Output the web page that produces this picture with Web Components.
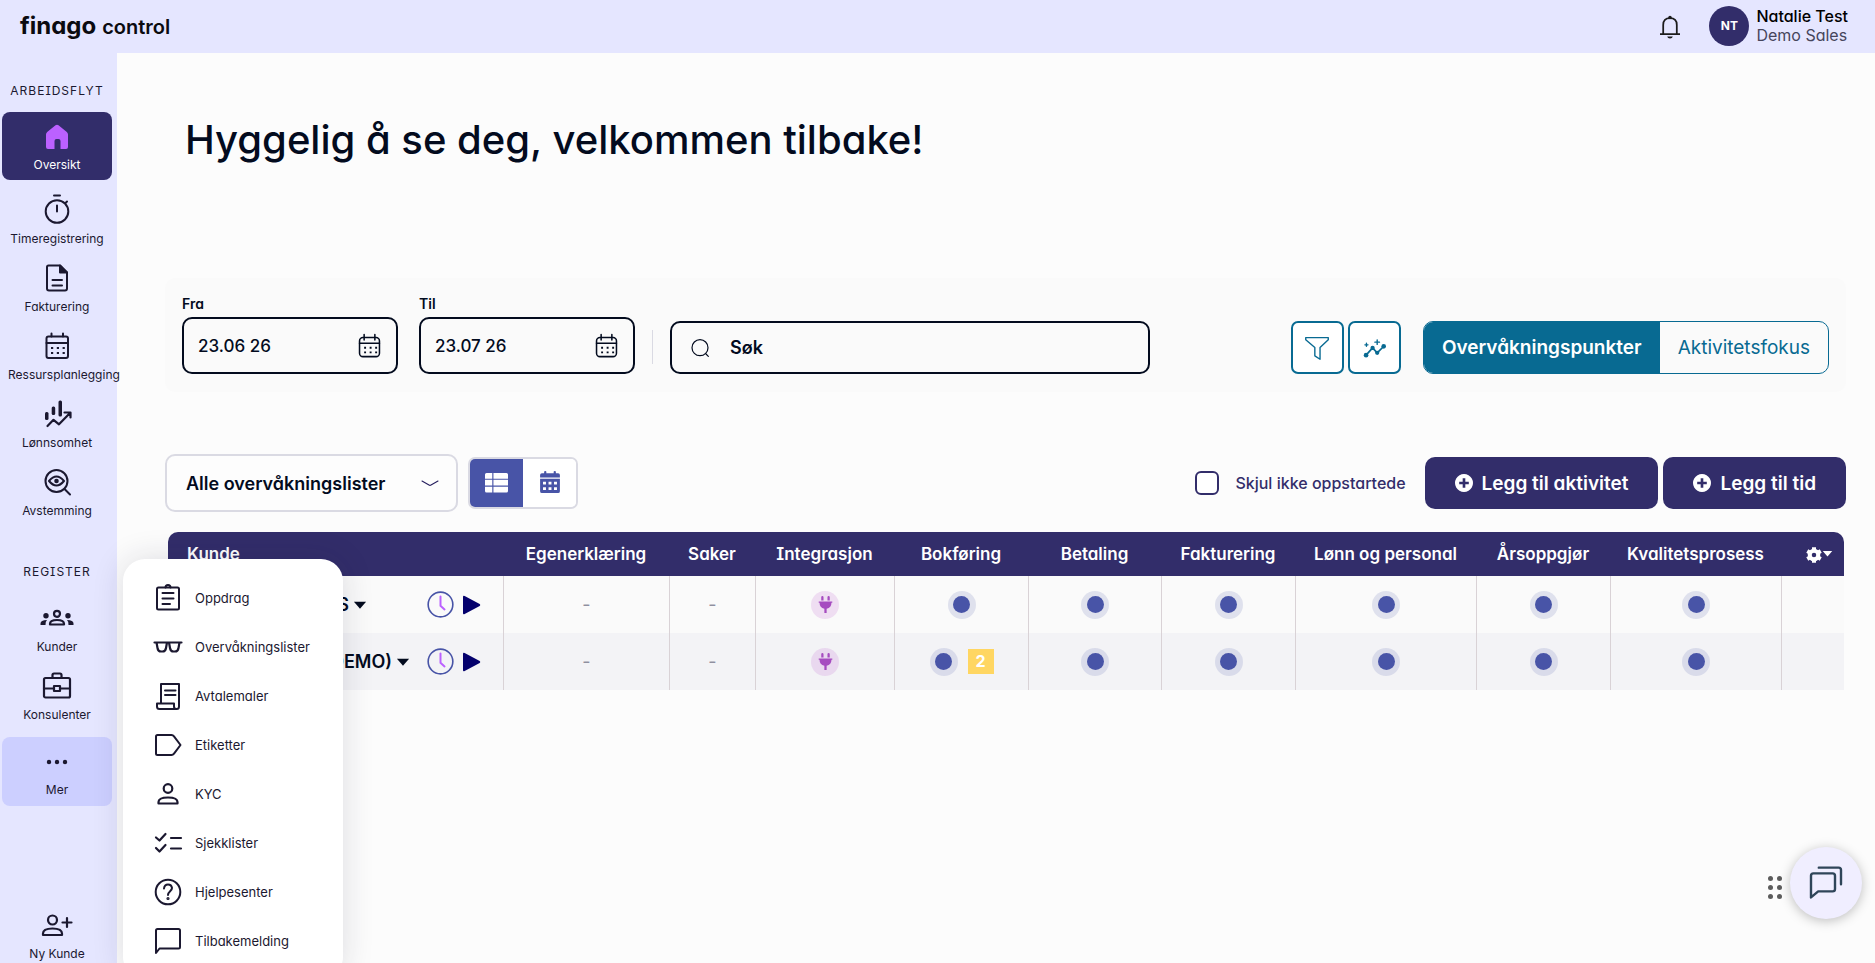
<!DOCTYPE html>
<html lang="no">
<head>
<meta charset="utf-8">
<title>Finago Control</title>
<style>
  :root {
    --navy: #322d6a;
    --ink: #030b1e;
    --lilac: #e5e6ff;
    --teal: #086a92;
    --blue: #4854a7;
    --page: #fcfcfc;
    --line: #dadae3;
  }
  body {
    margin: 0;
    background: var(--page);
    color: var(--ink);
    font-family: Inter, "Liberation Sans", sans-serif;
    font-feature-settings: "cv11", "cv08";
  }
</style>
</head>
<body>
<app-shell>
  <app-header slot="header"></app-header>
  <side-nav slot="nav"></side-nav>
  <welcome-title>Hyggelig å se deg, velkommen tilbake!</welcome-title>
  <filter-panel></filter-panel>
  <list-toolbar></list-toolbar>
  <watch-table></watch-table>
</app-shell>
<chat-launcher></chat-launcher>

<script>
const stroke = (w, body) => `<g fill="none" stroke="currentColor" stroke-width="${w}" stroke-linecap="round" stroke-linejoin="round">${body}</g>`;

// every icon is drawn on a 30 x 30 grid
const ICONS = {
  home: `<path fill="currentColor" d="M4 12.5Q4 11 5.200 10L13.500 3.300Q15 2.200 16.500 3.300L24.800 10Q26 11 26 12.500V25Q26 27 24 27H18.500V19Q18.500 17 16.500 17H14.500Q12.500 17 12.500 19V27H6Q4 27 4 25Z"/>`,
  stopwatch: stroke(2, `<circle cx="15" cy="15.500" r="11.3"/><path d="M15 9.500v6M12-.5h6M23.500 7l1.500-1.500"/>`),
  invoice: stroke(2, `<path d="M6.500 1.500h11.500l7 7V24.500q0 2-2 2H7q-2 0-2-2V3q0-1.500 1.500-1.500zM10.500 16h9.500M10.500 21.500h9.500"/><path fill="currentColor" d="M18 1.500v7h7z"/>`),
  calendar: stroke(2, `<rect x="4.500" y="4.500" width="21.500" height="21.500" rx="2"/><path d="M4.500 11h21.500M9.500 1.500v3M21 1.500v3"/>`) + `<path stroke="currentColor" stroke-width="2.200" stroke-dasharray="2.200 3.600" d="M9 16h14M9 21h14"/>`,
  profit: `<g fill="currentColor"><rect x="3" y="12" width="3.500" height="8" rx="1.500"/><rect x="9.700" y="6.500" width="3.500" height="8.500" rx="1.500"/><rect x="16.500" y=".5" width="3.500" height="16" rx="1.500"/></g>` + stroke(2.2, `<path d="M5.500 26l6-6.200 5.500 4.500L28 13M22.500 12.500h6v5"/>`),
  audit: stroke(2, `<circle cx="14.500" cy="13" r="11"/><path d="M22.500 21l5.500 5.500M7 13q7.500-9 15 0q-7.500 9-15 0z"/><circle cx="14.500" cy="13" r="1.300" fill="currentColor"/>`),
  people: `<g fill="currentColor"><circle cx="4" cy="11.800" r="2.700"/><circle cx="26" cy="11.800" r="2.700"/><path d="M-1.500 21V19.500Q-1.500 16 5 16Q3 18 3.500 21ZM31.500 21V19.500Q31.500 16 25 16Q27 18 26.500 21Z"/></g>` + stroke(2.2, `<circle cx="15" cy="9.800" r="3"/><path d="M8 20.500v-.8q0-3.700 7-3.700t7 3.700v.8z"/>`),
  briefcase: stroke(2.2, `<rect x="2" y="6" width="26" height="19.500" rx="1.500"/><path d="M10.500 6V3q0-1.500 1.500-1.500h6q1.500 0 1.500 1.500v3M2 16.500h10M18 16.500h10"/><rect x="12" y="14" width="6" height="5"/>`),
  dots: `<g fill="currentColor"><circle cx="7" cy="15" r="2.200"/><circle cx="15" cy="15" r="2.200"/><circle cx="23" cy="15" r="2.200"/></g>`,
  personAdd: stroke(2.2, `<circle cx="10.500" cy="9" r="4.500"/><path d="M1 24v-1.500q0-5 9.500-5t9.500 5V24z"/><path d="M25 7v9M20.500 11.500h9"/>`),
  clipboard: stroke(2, `<rect x="4" y="4.500" width="22" height="22" rx="1.500"/><path d="M9.500 10h11M9.500 15.500h11M9.500 21h7.500M12.500 4.500q0-2.500 2.500-2.500t2.500 2.500"/>`),
  glasses: stroke(2.200, `<path d="M1.500 10.500h12.500M16 10.500h12.500M3.500 10.500l1 5.500q.5 3.500 3.500 3.500h1.500q3 0 3.500-3.500l1-5.500M16 10.500l1 5.500q.5 3.500 3.500 3.500h1.500q3 0 3.500-3.500l1-5.500M13.500 10.500h3"/>`),
  template: stroke(2, `<path d="M8 22V3h18v22.500q0 2.500-2.300 2.500H6.500Q4 28 4 25.500V22.500h17v3q0 2.500 2.500 2.500M12 9.500h10.500M12 14h10.500"/>`),
  tag: stroke(2, `<path d="M4.500 5h14q1.500 0 2.500 1.300L27.500 15 21 23.700q-1 1.300-2.500 1.300h-14q-1.500 0-1.500-1.500V6.500Q3 5 4.500 5z"/>`),
  person: stroke(2.2, `<circle cx="15" cy="9.500" r="4.300"/><path d="M5.500 24.500v-1.500q0-4.500 9.500-4.500t9.500 4.500v1.500z"/>`),
  checklist: stroke(2.2, `<path d="M3 9.500l3.500 3L12.500 6M3 20l3.500 3.500 6-6.500M18 10h10M18 20.500h10"/>`),
  help: stroke(2, `<circle cx="15" cy="15" r="12.300"/><path d="M11 11.500q.5-4 4-4t4 3.500c0 3-4 3.500-4 7"/><circle cx="15" cy="21.500" r=".6" fill="currentColor"/>`),
  message: stroke(2, `<path d="M3 27V4.500q0-1.500 1.500-1.500h21q1.500 0 1.500 1.500V21q0 1.500-1.500 1.500h-19z"/>`),
  bell: stroke(2.2, `<path stroke-linecap="butt" d="M2.500 24h25M6.500 24V12.500Q6.500 4 15 4t8.500 8.500V24"/>`) + `<circle cx="15" cy="3" r="2.200" fill="currentColor"/><path fill="currentColor" d="M11.500 27h7q-.5 2.500-3.500 2.500t-3.500-2.500z"/>`,
  calendarThin: stroke(2, `<rect x="2" y="4.500" width="26" height="25" rx="4.500"/><path d="M2 12h26M8 .8v7M22 .8v7"/>`) + `<path stroke="currentColor" stroke-width="2.500" stroke-dasharray="2.500 4.700" d="M8 18h18M8 24h18"/>`,
  search: stroke(1.8, `<circle cx="15" cy="14.500" r="12"/><path d="M24 24l3.500 3.500"/>`),
  funnel: stroke(1.6, `<path d="M2 3h26v2.500L18.500 14.500V28l-6-4V14.500L2 5.500z"/>`),
  insights: stroke(2.2, `<path d="M4 25l8.500-9.500 6 6.500 8-8"/>`) + `<g fill="currentColor"><circle cx="4" cy="25" r="3"/><circle cx="12.500" cy="15.500" r="2.800"/><circle cx="18.500" cy="22" r="2.800"/><circle cx="27" cy="13.500" r="3"/></g>` + stroke(1.8, `<path d="M18.500 5v6M15.500 8h6M4.500 9.500v4M2.500 11.500h4"/>`),
  chevron: stroke(1.6, `<path d="M3 12l10.500 6q1.500 1 3 0L27 12"/>`),
  list: `<path fill="currentColor" d="M2 2.500h7.500v7.500H0V4.500q0-2 2-2zM11 2.500h17q2 0 2 2V10H11zM0 11.500h9.500v7.500H0zM11 11.500h19v7.500H11zM0 20.500h9.500V28H2q-2 0-2-2zM11 20.500h19V26q0 2-2 2H11z"/>`,
  calendarSolid: `<path fill="currentColor" fill-rule="evenodd" d="M7 1q0-1 1.500-1T10 1v2h10V1q0-1 1.500-1T23 1v2h3q2.500 0 2.500 2.500V9h-27V5.500Q1.500 3 4 3h3zM1.500 10.500h27V27.500q0 2.500-2.500 2.500H4q-2.500 0-2.500-2.500zM5.500 14.500v4h4v-4zm7.500 0v4h4v-4zm7.500 0v4h4v-4zM5.500 22v4h4v-4zm7.500 0v4h4v-4zm7.500 0v4h4v-4z"/>`,
  plus: `<path fill="currentColor" fill-rule="evenodd" d="M15 0a15 15 0 1 0 .01 0zM12.800 7h4.400v5.800H23v4.400h-5.800V23h-4.400v-5.800H7v-4.400h5.800z"/>`,
  clock: `<circle cx="15" cy="15" r="13.700" fill="none" stroke="#4854a7" stroke-width="1.800"/><path fill="none" stroke="#bb61ff" stroke-width="2.200" stroke-linecap="round" d="M15 6v10.500l4.500 4"/>`,
  play: `<path fill="#04006c" d="M0 3Q0 0 2.500 1.500L25 13.500q2 1.500 0 3L2.500 28.500Q0 30 0 27z"/>`,
  plug: `<path fill="currentColor" d="M7.500 2q0-2 2-2T11.500 2v6h-4zM18.500 2q0-2 2-2T22.500 2v6h-4zM3 9.500h24V12h-1.500q0 9-8.500 10.500V30h-4v-7.500Q4.500 21 4.500 12H3z"/>`,
  gear: `<g fill="none" stroke="currentColor"><circle cx="15" cy="15" r="8" stroke-width="7.500"/><path stroke-width="7.500" stroke-linejoin="round" d="M15 .5v6M15 23.500v6M2.400 7.700l5.200 3M22.400 19.300l5.200 3M2.400 22.300l5.200-3M22.400 10.700l5.200-3"/></g>`,
  caret: `<path fill="currentColor" d="M2 8h26L15 23z"/>`,
  chat: stroke(2, `<path d="M2.500 27V9q0-2 2-2h16q2 0 2 2v11q0 2-2 2h-12z"/><path d="M9 2.200h16.500q2 0 2 2V16"/>`),
};

function define(name, template) {
  customElements.define(name, class extends HTMLElement {
    connectedCallback() {
      if (this.shadowRoot) return;
      this.attachShadow({mode: 'open'}).innerHTML = typeof template === 'function' ? template(this) : template;
    }
  });
}

define('svg-icon', el => {
  const size = el.getAttribute('size') || 30;
  return `
    <style>
      :host { display: inline-flex; flex: none; }
      svg { display: block; overflow: visible; }
    </style>
    <svg width="${size}" height="${size}" viewBox="0 0 30 30" aria-hidden="true">${ICONS[el.getAttribute('name')]}</svg>`;
});

define('app-shell', `
  <style>
    :host { display: flex; flex-direction: column; height: 100vh; overflow: hidden; }
    .body { display: flex; flex: 1; min-height: 0; }
    main { flex: 1; min-width: 0; padding: 0 29px 0 48px; }
  </style>
  <slot name="header"></slot>
  <div class="body">
    <slot name="nav"></slot>
    <main><slot></slot></main>
  </div>`);

define('app-header', `
  <style>
    :host {
      display: flex;
      align-items: center;
      justify-content: space-between;
      box-sizing: border-box;
      height: 53px;
      padding: 0 27px 2px 20px;
      background: var(--lilac);
    }
    .logo { display: flex; align-items: baseline; gap: 6px; color: #0b0b10; text-decoration: none; }
    .logo b { font-size: 24px; line-height: 32px; font-weight: 700; }
    .logo span { font-size: 20px; font-weight: 600; }
    .account { display: flex; align-items: center; }
    button { border: 0; padding: 0; background: none; font: inherit; color: #1c1c1c; }
    .bell { display: flex; margin-right: 27px; padding-top: 2px; }
    .user { display: flex; align-items: center; gap: 7px; text-align: left; }
    .avatar {
      display: grid;
      place-items: center;
      width: 40px;
      height: 40px;
      border-radius: 50%;
      background: var(--navy);
      color: #fff;
      font-size: 12px;
      font-weight: 700;
    }
    .name, .role { display: block; font-size: 16px; line-height: 19px; }
    .name { font-weight: 500; color: #000; }
    .role { color: #45455c; }
  </style>
  <a class="logo" href="#"><b>finago</b><span>control</span></a>
  <div class="account">
    <button class="bell" aria-label="Varsler"><svg-icon name="bell" size="24"></svg-icon></button>
    <button class="user">
      <span class="avatar">NT</span>
      <span><span class="name">Natalie Test</span><span class="role">Demo Sales</span></span>
    </button>
  </div>`);

define('nav-item', el => `
  <style>
    :host { display: block; height: 68px; }
    a {
      display: flex;
      flex-direction: column;
      align-items: safe center;
      box-sizing: border-box;
      height: 100%;
      padding: 10px 6px 0;
      border-radius: 8px;
      color: #1b1830;
      font-size: 12px;
      line-height: 16px;
      text-decoration: none;
      white-space: nowrap;
    }
    svg-icon { margin-bottom: 5px; }
    :host([active]) a { background: var(--navy); color: #fff; }
    :host([active]) svg-icon { color: #bb61ff; }
    :host([open]) a { background: #cccfff; }
  </style>
  <a href="#"><svg-icon name="${el.getAttribute('icon')}"></svg-icon><span><slot></slot></span></a>`);

define('menu-entry', el => `
  <style>
    :host { display: block; }
    a {
      display: flex;
      align-items: center;
      gap: 12px;
      height: 49px;
      padding-left: 30px;
      color: #1b1830;
      font-size: 13px;
      text-decoration: none;
    }
  </style>
  <a href="#"><svg-icon name="${el.getAttribute('icon')}"></svg-icon><slot></slot></a>`);

define('side-nav', `
  <style>
    :host {
      display: block;
      position: relative;
      z-index: 2;
      box-sizing: border-box;
      width: 117px;
      padding: 0 5px 0 2px;
      background: var(--lilac);
    }
    h2 {
      margin: 0;
      color: #1b1830;
      font-size: 12px;
      line-height: 16px;
      font-weight: 400;
      letter-spacing: 1px;
      text-align: center;
    }
    .work { padding: 30px 0 13px; }
    .register { padding: 38px 0 14px; }
    nav { display: flex; flex-direction: column; }
    .first { margin-bottom: 6px; }
    .more { height: 69px; margin-top: 7px; }
    .new { margin-top: 95px; }
    .menu {
      position: absolute;
      left: 123px;
      top: 506px;
      width: 220px;
      box-sizing: border-box;
      padding: 14px 0;
      border-radius: 22px;
      background: #fff;
      box-shadow: 0 0 32px rgba(30, 30, 60, .14);
    }
  </style>
  <nav>
    <h2 class="work">ARBEIDSFLYT</h2>
    <nav-item class="first" icon="home" active>Oversikt</nav-item>
    <nav-item icon="stopwatch">Timeregistrering</nav-item>
    <nav-item icon="invoice">Fakturering</nav-item>
    <nav-item icon="calendar">Ressursplanlegging</nav-item>
    <nav-item icon="profit">Lønnsomhet</nav-item>
    <nav-item icon="audit">Avstemming</nav-item>
    <h2 class="register">REGISTER</h2>
    <nav-item icon="people">Kunder</nav-item>
    <nav-item icon="briefcase">Konsulenter</nav-item>
    <nav-item class="more" icon="dots" open>Mer</nav-item>
    <nav-item class="new" icon="personAdd">Ny Kunde</nav-item>
  </nav>
  <div class="menu">
    <menu-entry icon="clipboard">Oppdrag</menu-entry>
    <menu-entry icon="glasses">Overvåkningslister</menu-entry>
    <menu-entry icon="template">Avtalemaler</menu-entry>
    <menu-entry icon="tag">Etiketter</menu-entry>
    <menu-entry icon="person">KYC</menu-entry>
    <menu-entry icon="checklist">Sjekklister</menu-entry>
    <menu-entry icon="help">Hjelpesenter</menu-entry>
    <menu-entry icon="message">Tilbakemelding</menu-entry>
  </div>`);

define('welcome-title', `
  <style>
    :host { display: block; padding: 62px 20px 113px; }
    h1 { margin: 0; font-size: 40px; line-height: 50px; font-weight: 500; }
  </style>
  <h1><slot></slot></h1>`);

define('date-field', el => `
  <style>
    :host { display: block; width: 216px; }
    label { display: block; margin-bottom: 3px; font-size: 14px; line-height: 20px; font-weight: 600; }
    .box {
      display: flex;
      align-items: center;
      box-sizing: border-box;
      height: 57px;
      padding: 0 15px 0 14px;
      border: 2px solid var(--ink);
      border-radius: 10px;
    }
    input {
      flex: 1;
      min-width: 0;
      padding: 0;
      border: 0;
      outline: 0;
      background: none;
      color: inherit;
      font: 500 17px Inter, sans-serif;
    }
  </style>
  <label for="date">${el.getAttribute('label')}</label>
  <div class="box">
    <input id="date" type="text" value="${el.getAttribute('value')}">
    <svg-icon name="calendarThin" size="23"></svg-icon>
  </div>`);

define('search-field', `
  <style>
    :host { display: block; }
    label {
      display: flex;
      align-items: center;
      gap: 20px;
      box-sizing: border-box;
      height: 53px;
      padding: 0 18px;
      border: 2px solid var(--ink);
      border-radius: 10px;
    }
    input {
      flex: 1;
      min-width: 0;
      padding: 0;
      border: 0;
      outline: 0;
      background: none;
      font: 600 18px Inter, sans-serif;
    }
    input::placeholder { color: var(--ink); opacity: 1; }
  </style>
  <label>
    <svg-icon name="search" size="20"></svg-icon>
    <input type="search" placeholder="Søk" aria-label="Søk">
  </label>`);

define('filter-panel', `
  <style>
    :host {
      display: flex;
      align-items: flex-end;
      padding: 16px 17px 18px;
      border-radius: 10px;
      background: #fafafa;
    }
    date-field + date-field { margin-left: 21px; }
    hr { align-self: flex-end; width: 1px; height: 34px; margin: 0 17px 10px; border: 0; background: var(--line); }
    search-field { flex: 0 1 480px; }
    .icons { display: flex; gap: 4px; margin: 0 22px 0 auto; }
    button { font: inherit; }
    .icons button {
      display: grid;
      place-items: center;
      width: 53px;
      height: 53px;
      padding: 0;
      border: 2px solid var(--teal);
      border-radius: 7px;
      background: #fff;
      color: var(--teal);
    }
    .focus { display: flex; height: 53px; box-sizing: border-box; border: 1px solid var(--teal); border-radius: 10px; overflow: hidden; }
    .focus button { padding: 0 18px; border: 0; background: none; color: var(--teal); font-size: 19px; }
    .focus .on { background: var(--teal); color: #fff; font-weight: 600; }
  </style>
  <date-field label="Fra" value="23.06 26"></date-field>
  <date-field label="Til" value="23.07 26"></date-field>
  <hr>
  <search-field></search-field>
  <div class="icons">
    <button aria-label="Filter"><svg-icon name="funnel" size="26"></svg-icon></button>
    <button aria-label="Innsikt"><svg-icon name="insights" size="23"></svg-icon></button>
  </div>
  <div class="focus">
    <button class="on">Overvåkningspunkter</button>
    <button>Aktivitetsfokus</button>
  </div>`);

define('action-button', `
  <style>
    :host { display: block; }
    button {
      display: flex;
      align-items: center;
      gap: 9px;
      height: 52px;
      padding: 0 30px;
      border: 0;
      border-radius: 10px;
      background: var(--navy);
      color: #fff;
      font: inherit;
      font-size: 19px;
      font-weight: 600;
    }
  </style>
  <button><svg-icon name="plus" size="18"></svg-icon><slot></slot></button>`);

define('list-toolbar', `
  <style>
    :host { display: flex; align-items: center; padding: 62px 0 20px; }
    .select { display: grid; align-items: center; width: 293px; }
    .select > * { grid-area: 1 / 1; }
    .select svg-icon { justify-self: end; margin-right: 18px; pointer-events: none; color: #241c5c; }
    select {
      appearance: none;
      height: 58px;
      padding: 0 19px;
      border: 2px solid var(--line);
      border-radius: 10px;
      background: #fdfdfd;
      color: inherit;
      font: inherit;
      font-size: 18px;
      font-weight: 600;
    }
    .view { display: flex; box-sizing: border-box; width: 110px; height: 52px; margin-left: 10px; border: 2px solid var(--line); border-radius: 7px; overflow: hidden; }
    .view button { display: grid; place-items: center; flex: 1; padding: 0 0 2px; border: 0; background: #fff; color: var(--blue); }
    .view .on { background: var(--blue); color: #fff; }
    .hide { display: flex; align-items: center; gap: 16px; margin-left: auto; color: var(--navy); font-size: 16px; font-weight: 500; }
    input { appearance: none; width: 24px; height: 24px; margin: 0; border: 2px solid var(--navy); border-radius: 6px; background: #fff; }
    .actions { display: flex; gap: 5px; margin-left: 19px; }
  </style>
  <div class="select">
    <select aria-label="Overvåkningsliste"><option>Alle overvåkningslister</option></select>
    <svg-icon name="chevron" size="20"></svg-icon>
  </div>
  <div class="view">
    <button class="on" aria-label="Liste"><svg-icon name="list" size="23"></svg-icon></button>
    <button aria-label="Kalender"><svg-icon name="calendarSolid" size="22"></svg-icon></button>
  </div>
  <label class="hide"><input type="checkbox">Skjul ikke oppstartede</label>
  <div class="actions">
    <action-button>Legg til aktivitet</action-button>
    <action-button>Legg til tid</action-button>
  </div>`);

define('status-dot', `
  <style>
    :host {
      display: inline-grid;
      place-items: center;
      width: 28px;
      height: 28px;
      border-radius: 50%;
      background: rgba(72, 84, 167, .15);
      vertical-align: middle;
    }
    i { width: 17px; height: 17px; border-radius: 50%; background: var(--blue); }
  </style>
  <i></i>`);

define('plug-status', `
  <style>
    :host {
      display: inline-grid;
      place-items: center;
      width: 28px;
      height: 28px;
      border-radius: 50%;
      background: rgba(180, 70, 200, .15);
      color: #a64cc0;
      vertical-align: middle;
    }
  </style>
  <svg-icon name="plug" size="17"></svg-icon>`);

define('client-cell', `
  <style>
    :host { display: flex; align-items: center; }
    b { display: flex; align-items: center; justify-content: flex-end; width: 180px; gap: 4px; font-size: 18px; font-weight: 600; }
    :host([wide]) b { width: 223px; }
    .tools { display: flex; align-items: center; gap: 9px; margin-left: auto; padding-right: 20px; }
    button { display: flex; padding: 0; border: 0; background: none; }
  </style>
  <b><slot></slot><svg-icon name="caret" size="14"></svg-icon></b>
  <span class="tools">
    <button aria-label="Tid"><svg-icon name="clock" size="27"></svg-icon></button>
    <button aria-label="Start"><svg-icon name="play" size="20"></svg-icon></button>
  </span>`);

define('watch-table', () => {
  const dots = '<td><status-dot></status-dot></td>'.repeat(5);
  return `
  <style>
    :host { display: block; padding: 0 2px 0 3px; }
    table { width: 100%; border-collapse: separate; border-spacing: 0; table-layout: fixed; }
    th { height: 44px; padding: 0; background: var(--navy); color: #fff; font-size: 17px; font-weight: 600; }
    th:first-child { padding-left: 19px; border-top-left-radius: 10px; text-align: left; }
    th:last-child { padding-left: 14px; border-top-right-radius: 10px; }
    th button { display: inline-flex; align-items: center; padding: 0; border: 0; background: none; color: #fff; vertical-align: middle; }
    th svg-icon + svg-icon { padding-bottom: 3px; }
    td { box-sizing: border-box; height: 57px; padding: 0; border-left: 1px solid #d9d2d6; background: #fafafa; color: #8f8f9f; text-align: center; font-size: 18px; }
    td:first-child { padding-left: 19px; border-left: 0; color: var(--ink); }
    tr:last-child td { background: #f3f3f6; }
    .badge { display: inline-block; width: 26px; margin-left: 10px; background: #ffd662; color: #fff; font-size: 16px; line-height: 25px; font-weight: 700; vertical-align: middle; }
  </style>
  <table>
    <colgroup>
      <col><col width="166"><col width="86"><col width="139"><col width="134"><col width="133">
      <col width="134"><col width="181"><col width="134"><col width="171"><col width="63">
    </colgroup>
    <thead>
      <tr>
        <th>Kunde</th><th>Egenerklæring</th><th>Saker</th><th>Integrasjon</th><th>Bokføring</th><th>Betaling</th>
        <th>Fakturering</th><th>Lønn og personal</th><th>Årsoppgjør</th><th>Kvalitetsprosess</th>
        <th><button aria-label="Innstillinger"><svg-icon name="gear" size="16"></svg-icon><svg-icon name="caret" size="11"></svg-icon></button></th>
      </tr>
    </thead>
    <tbody>
      <tr>
        <td><client-cell>AS</client-cell></td><td>-</td><td>-</td><td><plug-status></plug-status></td>
        <td><status-dot></status-dot></td>${dots}<td></td>
      </tr>
      <tr>
        <td><client-cell wide>(DEMO)</client-cell></td><td>-</td><td>-</td><td><plug-status></plug-status></td>
        <td><status-dot></status-dot><span class="badge">2</span></td>${dots}<td></td>
      </tr>
    </tbody>
  </table>`;
});

define('chat-launcher', `
  <style>
    :host { position: fixed; right: 13px; bottom: 44px; display: flex; align-items: center; gap: 8px; }
    .grip { display: grid; grid-template-columns: 5px 5px; gap: 4px; padding-top: 8px; }
    i { width: 5px; height: 5px; border-radius: 50%; background: #5c5c5c; }
    button {
      display: grid;
      place-items: center;
      width: 72px;
      height: 72px;
      padding: 0;
      border: 0;
      border-radius: 50%;
      background: #f0eeff;
      box-shadow: 0 2px 12px rgba(0, 0, 0, .25);
      color: #2f4559;
    }
  </style>
  <span class="grip"><i></i><i></i><i></i><i></i><i></i><i></i></span>
  <button aria-label="Chat"><svg-icon name="chat" size="36"></svg-icon></button>`);
</script>
</body>
</html>
